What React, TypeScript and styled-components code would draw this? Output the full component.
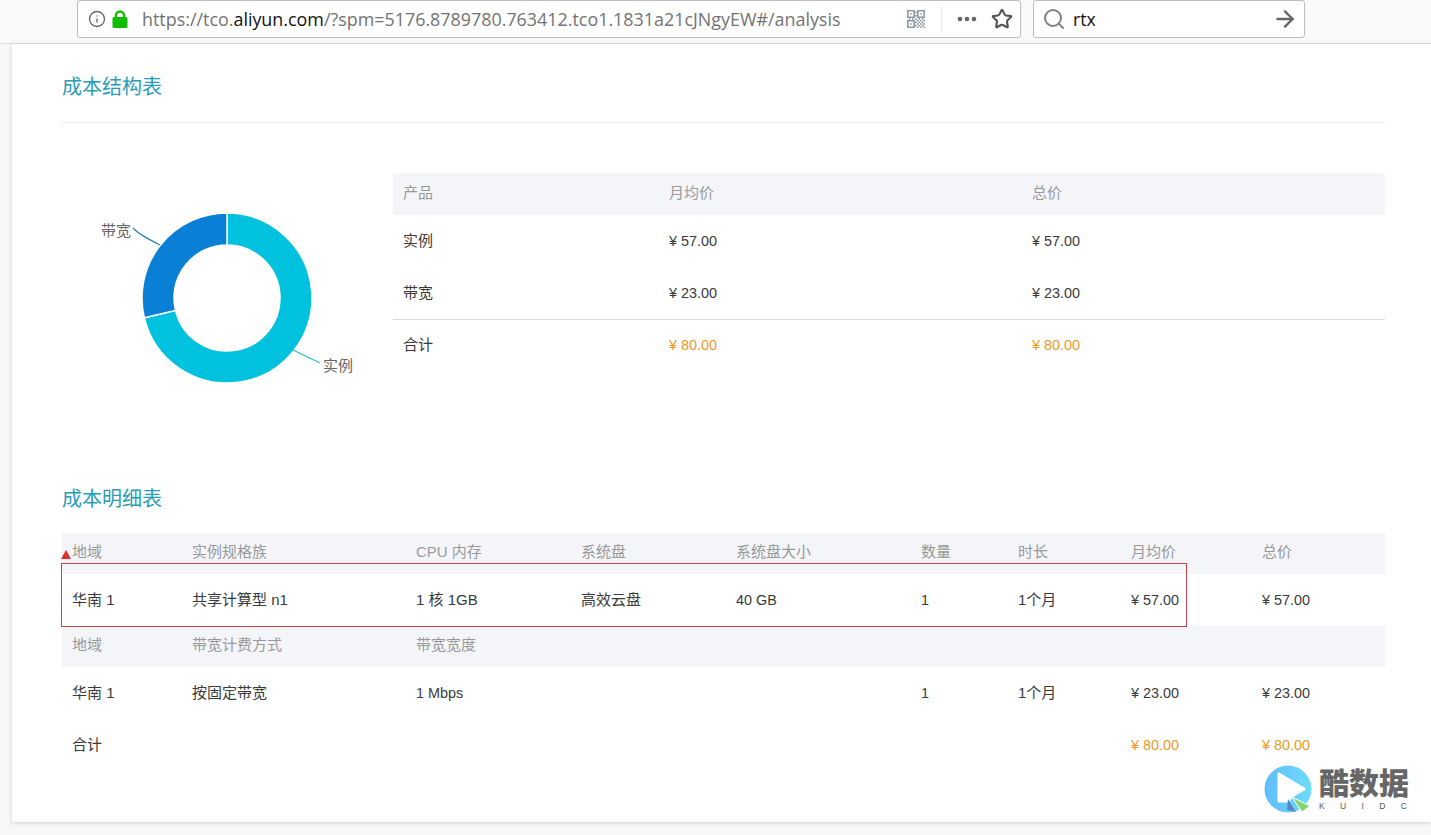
import styled, { createGlobalStyle } from 'styled-components';
import { ArrowRight, Info, Search, Star } from 'lucide-react';

const GlobalStyle = createGlobalStyle`
  html, body {
    margin: 0;
    height: 100%;
    overflow: hidden;
    background: #f8f8f8;
    font-family: "Liberation Sans", "Noto Sans CJK SC", sans-serif;
  }
`;

const Toolbar = styled.div`
  display: flex;
  align-items: flex-start;
  height: 43px;
  padding-left: 77px;
  gap: 12px;
  background: #f9f9f9;
  border-bottom: 1px solid #dedede;
`;

const UrlBar = styled.div`
  display: flex;
  align-items: center;
  width: 944px;
  height: 38px;
  box-sizing: border-box;
  padding: 0 7px 0 10px;
  background: #fff;
  border: 1px solid #bdbdbd;
  border-radius: 3px;
`;

const SearchBar = styled(UrlBar)`
  width: 272px;
  padding: 0 6px 0 8px;
`;

const UrlText = styled.div`
  flex: 1;
  margin-left: 14px;
  font-family: "Open Sans", sans-serif;
  font-size: 17.9px;
  color: #737373;
  white-space: nowrap;
`;

const Host = styled.span`
  color: #111;
`;

const SearchText = styled.div`
  flex: 1;
  margin-left: 7px;
  font-family: "Open Sans", sans-serif;
  font-size: 17.6px;
  color: #111;
`;

const Separator = styled.div`
  width: 1px;
  height: 26px;
  margin: 0 15px 0 16px;
  background: #ececec;
`;

const Dots = styled.svg`
  margin-right: 14px;
`;

const Panel = styled.main`
  position: relative;
  box-sizing: border-box;
  height: 778px;
  margin-left: 12px;
  padding: 0 46px 0 50px;
  background: #fff;
  box-shadow: 0 1px 4px rgba(0, 0, 0, 0.16);
`;

const SectionHead = styled.div`
  height: 79px;
  box-sizing: border-box;
  padding-top: 28px;
  border-bottom: 1px solid #e9e9e9;
`;

const Title = styled.h2`
  margin: 0;
  font-size: 20px;
  line-height: 30px;
  font-weight: 400;
  color: #2a9cb8;
`;

const SummaryRow = styled.div`
  display: flex;
  height: 250px;
  margin-top: 50px;
`;

const ChartSvg = styled.svg`
  flex: none;
  width: 331px;
  height: 250px;
`;

const ChartLabel = styled.text`
  font-size: 15px;
  fill: #666;
`;

const SummaryTable = styled.div`
  flex: 1;
`;

const DetailHead = styled.div`
  margin: 61px 0 19px;
`;

const DetailTable = styled.div`
  position: relative;
`;

const Row = styled.div<{ $cols: string; $head?: boolean; $line?: boolean }>`
  display: grid;
  grid-template-columns: ${({ $cols }) => $cols};
  align-items: center;
  box-sizing: border-box;
  height: ${({ $head }) => ($head ? '41px' : '52px')};
  padding-bottom: ${({ $head }) => ($head ? '3px' : '1px')};
  background: ${({ $head }) => ($head ? '#f4f5f9' : '#fff')};
  color: ${({ $head }) => ($head ? '#999' : '#3a3a3a')};
  box-shadow: ${({ $line }) => ($line ? 'inset 0 1px 0 #d9d9d9' : 'none')};
`;

const SummaryHeadRow = styled(Row)`
  height: 42px;
`;

const CellBox = styled.div<{ $total?: boolean; $cjk?: boolean }>`
  padding-left: 10px;
  white-space: nowrap;
  font-size: ${({ $cjk }) => ($cjk ? '15px' : '14.4px')};
  line-height: 20px;
  height: 20px;
  color: ${({ $total }) => ($total ? '#ec9a1f' : 'inherit')};
`;

const Marker = styled.div`
  position: absolute;
  left: -1px;
  top: 30px;
  width: 1126px;
  height: 64px;
  box-sizing: border-box;
  border: 1px solid #c9404e;
  pointer-events: none;
`;

const MarkerArrow = styled.div`
  position: absolute;
  left: -1px;
  top: 17px;
  width: 0;
  height: 0;
  border-left: 5.5px solid transparent;
  border-right: 5.5px solid transparent;
  border-bottom: 9px solid #e0302d;
`;

const Watermark = styled.div`
  position: absolute;
  right: 22px;
  bottom: 9px;
  display: flex;
  align-items: flex-start;
  gap: 7px;
`;

const BrandName = styled.div`
  font-family: "Noto Sans CJK SC", sans-serif;
  font-size: 30px;
  line-height: 32px;
  font-weight: 900;
  color: #666;
`;

const BrandSub = styled.div`
  display: flex;
  justify-content: space-between;
  margin-top: 5px;
  padding: 0 2px 0 0;
  font-size: 8.5px;
  line-height: 9px;
  color: #555;
`;

const SUMMARY_COLS = '266px 363px 1fr';
const DETAIL_COLS = '120px 224px 165px 155px 185px 97px 113px 131px 1fr';

const summaryRows = [
  ['实例', '¥ 57.00', '¥ 57.00'],
  ['带宽', '¥ 23.00', '¥ 23.00'],
];

const instanceHead = ['地域', '实例规格族', 'CPU 内存', '系统盘', '系统盘大小', '数量', '时长', '月均价', '总价'];
const instanceRow = ['华南 1', '共享计算型 n1', '1 核 1GB', '高效云盘', '40 GB', '1', '1个月', '¥ 57.00', '¥ 57.00'];
const bandHead = ['地域', '带宽计费方式', '带宽宽度', '', '', '', '', '', ''];
const bandRow = ['华南 1', '按固定带宽', '1 Mbps', '', '', '1', '1个月', '¥ 23.00', '¥ 23.00'];

function Cell({ text = '', total }: { text?: string; total?: boolean }) {
  return (
    <CellBox $total={total} $cjk={/[\u4e00-\u9fff]/.test(text)}>
      {text}
    </CellBox>
  );
}

// donut slice from angle a to b, in degrees clockwise from the top
function slice(a: number, b: number) {
  const cx = 165;
  const cy = 125;
  const R = 85;
  const r = 53;
  const pt = (rad: number, deg: number) => {
    const t = (deg * Math.PI) / 180;
    return `${(cx + rad * Math.sin(t)).toFixed(2)} ${(cy - rad * Math.cos(t)).toFixed(2)}`;
  };
  const large = b - a > 180 ? 1 : 0;
  return `M${pt(R, a)}A${R} ${R} 0 ${large} 1 ${pt(R, b)}L${pt(r, b)}A${r} ${r} 0 ${large} 0 ${pt(r, a)}Z`;
}

function Donut() {
  return (
    <ChartSvg viewBox="0 0 331 250">
      <path d={slice(0, 256.5)} fill="#00c1de" stroke="#fff" strokeWidth="1.5" />
      <path d={slice(256.5, 360)} fill="#0a7fd6" stroke="#fff" strokeWidth="1.5" />
      <path d="M71 55Q76 61 98 72" fill="none" stroke="#2a7fb8" strokeWidth="1.2" />
      <path d="M231 177L258 190" fill="none" stroke="#2bb8cf" strokeWidth="1.2" />
      <ChartLabel x="39" y="63">带宽</ChartLabel>
      <ChartLabel x="261" y="198">实例</ChartLabel>
    </ChartSvg>
  );
}

function QrIcon() {
  const cells: [number, number][] = [];
  for (let y = 0; y < 11; y++) {
    for (let x = 0; x < 11; x++) {
      const inFinder = (x < 5 && y < 5) || (x > 5 && y < 5) || (x < 5 && y > 5);
      if (!inFinder && (x + y) % 2 === 0) cells.push([x, y]);
    }
  }
  return (
    <svg width="18" height="18" viewBox="0 0 18 18" fill="#8f98a6">
      <path d="M0 0h8v8H0zM1.600 1.600v4.800h4.800V1.600zM10 0h8v8h-8zM11.600 1.600v4.800h4.800V1.600zM0 10h8v8H0zM1.600 11.600v4.800h4.800v-4.800z" fillRule="evenodd" />
      <path d="M3.200 3.200h1.600v1.600H3.200zM13.200 3.200h1.600v1.600h-1.600zM3.200 13.200h1.600v1.600H3.200z" />
      {cells.map(([x, y]) => (
        <rect key={`${x}-${y}`} x={x * 1.64} y={y * 1.64} width="1.640" height="1.640" />
      ))}
    </svg>
  );
}

function LockIcon() {
  return (
    <svg width="16" height="18" viewBox="0 0 16 18" style={{ marginLeft: 6 }}>
      <path d="M4 8V5.500a4 4 0 0 1 8 0V8" fill="none" stroke="#12bc00" strokeWidth="2.400" />
      <rect x="0.500" y="7" width="15" height="11" rx="1.500" fill="#12bc00" />
    </svg>
  );
}

function LogoIcon() {
  return (
    <svg width="48" height="48" viewBox="0 0 48 48">
      <defs>
        <linearGradient id="logoFill" x1="0" y1="0" x2="1" y2="0">
          <stop offset="0" stopColor="#62bdfb" />
          <stop offset="1" stopColor="#6fdcfb" />
        </linearGradient>
      </defs>
      <circle cx="24" cy="24" r="23.500" fill="url(#logoFill)" />
      <path d="M15 9L40 24L28 31L24 36L15 36Z" fill="#fff" strokeLinejoin="round" stroke="#fff" strokeWidth="3" />
      <path d="M28 32L46 41L38 47Z" fill="#84d66a" stroke="#fff" strokeWidth="1" />
      <path d="M24 34L32 47L23 45Z" fill="#5b83c6" />
    </svg>
  );
}

export default function App() {
  return (
    <>
      <GlobalStyle />
      <Toolbar>
        <UrlBar>
          <Info size={18} color="#666" strokeWidth={1.8} />
          <LockIcon />
          <UrlText>
            https://tco.<Host>aliyun.com</Host>/?spm=5176.8789780.763412.tco1.1831a21cJNgyEW#/analysis
          </UrlText>
          <QrIcon />
          <Separator />
          <Dots width="20" height="6" viewBox="0 0 20 6" fill="#666">
            <circle cx="3" cy="3" r="2.300" />
            <circle cx="10" cy="3" r="2.300" />
            <circle cx="17" cy="3" r="2.300" />
          </Dots>
          <Star size={22} color="#555" strokeWidth={2.3} />
        </UrlBar>
        <SearchBar>
          <Search size={24} color="#808080" strokeWidth={2} />
          <SearchText>rtx</SearchText>
          <ArrowRight size={26} color="#666" strokeWidth={2.2} />
        </SearchBar>
      </Toolbar>
      <Panel>
        <SectionHead>
          <Title>成本结构表</Title>
        </SectionHead>
        <SummaryRow>
          <Donut />
          <SummaryTable>
            <SummaryHeadRow $cols={SUMMARY_COLS} $head>
              <Cell text="产品" />
              <Cell text="月均价" />
              <Cell text="总价" />
            </SummaryHeadRow>
            {summaryRows.map((row) => (
              <Row key={row[0]} $cols={SUMMARY_COLS}>
                {row.map((text, i) => (
                  <Cell key={i} text={text} />
                ))}
              </Row>
            ))}
            <Row $cols={SUMMARY_COLS} $line>
              <Cell text="合计" />
              <Cell text="¥ 80.00" total />
              <Cell text="¥ 80.00" total />
            </Row>
          </SummaryTable>
        </SummaryRow>
        <DetailHead>
          <Title>成本明细表</Title>
        </DetailHead>
        <DetailTable>
          <Row $cols={DETAIL_COLS} $head>
            {instanceHead.map((text, i) => (
              <Cell key={i} text={text} />
            ))}
          </Row>
          <Row $cols={DETAIL_COLS}>
            {instanceRow.map((text, i) => (
              <Cell key={i} text={text} />
            ))}
          </Row>
          <Row $cols={DETAIL_COLS} $head>
            {bandHead.map((text, i) => (
              <Cell key={i} text={text} />
            ))}
          </Row>
          <Row $cols={DETAIL_COLS}>
            {bandRow.map((text, i) => (
              <Cell key={i} text={text} />
            ))}
          </Row>
          <Row $cols={DETAIL_COLS}>
            <Cell text="合计" />
            <Cell />
            <Cell />
            <Cell />
            <Cell />
            <Cell />
            <Cell />
            <Cell text="¥ 80.00" total />
            <Cell text="¥ 80.00" total />
          </Row>
          <MarkerArrow />
          <Marker />
        </DetailTable>
        <Watermark>
          <LogoIcon />
          <div>
            <BrandName>酷数据</BrandName>
            <BrandSub>
              <span>K</span>
              <span>U</span>
              <span>I</span>
              <span>D</span>
              <span>C</span>
            </BrandSub>
          </div>
        </Watermark>
      </Panel>
    </>
  );
}
